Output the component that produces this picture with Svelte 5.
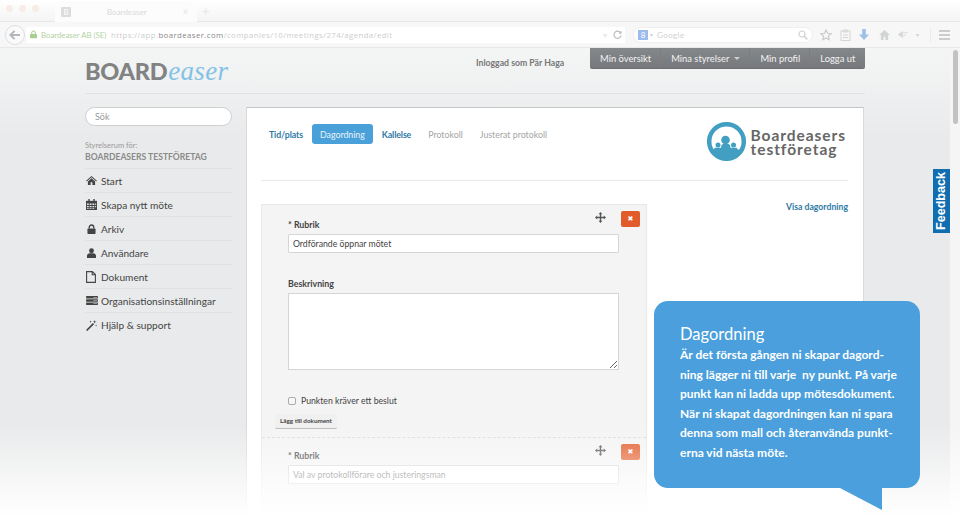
<script>
  const menu = [
    { label: 'Start', icon: 'home' },
    { label: 'Skapa nytt möte', icon: 'cal' },
    { label: 'Arkiv', icon: 'lock' },
    { label: 'Användare', icon: 'user' },
    { label: 'Dokument', icon: 'doc' },
    { label: 'Organisationsinställningar', icon: 'org' },
    { label: 'Hjälp & support', icon: 'wand' }
  ];
  const tabs = [
    { label: 'Tid/plats', kind: 'link' },
    { label: 'Dagordning', kind: 'active' },
    { label: 'Kallelse', kind: 'link' },
    { label: 'Protokoll', kind: 'off' },
    { label: 'Justerat protokoll', kind: 'off' }
  ];
  const nav = ['Min översikt', 'Mina styrelser', 'Min profil', 'Logga ut'];
</script>

{#snippet move()}
  <svg class="move" width="11" height="11" viewBox="0 0 11 11"><path d="M5.5 0 7.4 2.2H6.2V4.8H8.8V3.6L11 5.5 8.8 7.4V6.2H6.2V8.8H7.4L5.5 11 3.6 8.8H4.8V6.2H2.2V7.4L0 5.5 2.2 3.6V4.8H4.8V2.2H3.6Z" fill="#555"/></svg>
{/snippet}

<div class="window">
  <div class="tabbar">
    <div class="lights"><i></i><i></i><i></i></div>
    <div class="tab">
      <span class="favicon">B</span>
      <span class="tabtitle">Boardeaser</span>
      <span class="tabx">×</span>
    </div>
    <span class="plus">+</span>
  </div>
  <div class="toolbar">
    <span class="back">
      <svg width="12" height="10" viewBox="0 0 14 12"><path d="M6.5 1 1.5 6l5 5M2 6h11" fill="none" stroke="#b5b8bb" stroke-width="2.4"/></svg>
    </span>
    <div class="urlbar">
      <svg width="7" height="9" viewBox="0 0 8 9"><path d="M2 4V2.600a2 2 0 0 1 4 0V4" fill="none" stroke="#a9cf93" stroke-width="1.2"/><rect y="3.800" width="8" height="5" rx="1" fill="#a9cf93"/></svg>
      <span class="org">Boardeaser AB (SE)</span>
      <span class="url">https://app.<b>boardeaser.com</b>/companies/10/meetings/274/agenda/edit</span>
      <span class="urlend">▾</span>
      <svg width="9" height="9" viewBox="0 0 10 10"><path d="M8.500 3.200A4 4 0 1 0 9 6" fill="none" stroke="#bbb" stroke-width="1.2"/><path d="M9.500.8v3.400H6.100z" fill="#bbb"/></svg>
    </div>
    <div class="searchbar">
      <span class="g">8</span><span class="caret">▾</span>
      <span class="gtext">Google</span>
      <svg width="10" height="10" viewBox="0 0 10 10"><circle cx="4" cy="4" r="3" fill="none" stroke="#d0d0d0" stroke-width="1.2"/><path d="m6.200 6.200 3.200 3.200" stroke="#d0d0d0" stroke-width="1.500"/></svg>
    </div>
    <div class="tools">
      <svg width="12" height="12" viewBox="0 0 12 12"><path d="m6 1 1.500 3.300 3.600.4-2.700 2.400.8 3.600L6 8.900l-3.200 1.800.8-3.600L.9 4.700l3.600-.4Z" fill="none" stroke="#c8c8c8" stroke-width="1.100"/></svg>
      <svg width="11" height="12" viewBox="0 0 11 12"><rect x="1" y="2" width="9" height="9.500" fill="none" stroke="#d5d5d5"/><path d="M3.500 1h4v2h-4zM3 6h5M3 8.500h5" fill="none" stroke="#d5d5d5"/></svg>
      <svg width="10" height="11" viewBox="0 0 11 12"><path d="M3.500 0h4v6H11l-5.500 6L0 6h3.500Z" fill="#9dc0ea"/></svg>
      <svg class="gap" width="11" height="10" viewBox="0 0 12 11"><path d="M6 0 12 5.500h-2V11H7V7.500H5V11H2V5.500H0Z" fill="#d2d4d4"/></svg>
      <svg width="10" height="7" viewBox="0 0 11 8"><path d="M0 4 5 .8v6.400zM6 2h5M6 5h3" fill="#d8d8d8" stroke="#d8d8d8"/></svg>
      <span class="caret">▾</span>
      <span class="sep"></span>
      <span class="burger"><i></i><i></i><i></i></span>
    </div>
  </div>

  <div class="page">
    <div class="content">
      <header>
        <div class="brand"><b>BOARD</b><em>easer</em></div>
        <span class="who">Inloggad som Pär Haga</span>
        <nav>
          {#each nav as item, i}
            <span class="navitem">{item}{#if i === 1}<span class="navcaret"></span>{/if}</span>
          {/each}
        </nav>
      </header>

      <div class="columns">
        <aside>
          <div class="search">Sök</div>
          <div class="roomlabel">Styrelserum för:</div>
          <div class="roomname">BOARDEASERS TESTFÖRETAG</div>
          <ul>
            {#each menu as m}
              <li>
                <span class="ic">
                  {#if m.icon === 'home'}
                    <svg width="11" height="9" viewBox="0 0 12 10"><path d="M6 0 12 5.200l-.7.8L6 1.500.7 6 0 5.200ZM2 6l4-3.400L10 6v4H7V7H5v3H2Z" fill="#444"/></svg>
                  {:else if m.icon === 'cal'}
                    <svg width="11" height="11" viewBox="0 0 12 12"><path d="M0 2h12v10H0Z" fill="#444"/><path d="M2.500 0h1.500v3H2.500zM8 0h1.500v3H8z" fill="#444"/><path d="M1 5h2v1.500H1zM4 5h2v1.500H4zM7 5h2v1.500H7zM10 5h1v1.500h-1zM1 7.500h2V9H1zM4 7.500h2V9H4zM7 7.500h2V9H7zM10 7.500h1V9h-1zM1 10h2v1H1zM4 10h2v1H4zM7 10h2v1H7z" fill="#e8e9ea"/></svg>
                  {:else if m.icon === 'lock'}
                    <svg class="nudge" width="9" height="10" viewBox="0 0 10 11"><path d="M2.500 5V3.500a2.500 2.500 0 0 1 5 0V5" fill="none" stroke="#444" stroke-width="1.500"/><rect x=".5" y="5" width="9" height="6" rx=".8" fill="#444"/></svg>
                  {:else if m.icon === 'user'}
                    <svg class="nudge" width="9" height="10" viewBox="0 0 10 11"><circle cx="5" cy="3" r="2.700" fill="#444"/><path d="M0 11V8.500C0 6.800 1.500 6 3 5.800h4C8.500 6 10 6.800 10 8.500V11Z" fill="#444"/></svg>
                  {:else if m.icon === 'doc'}
                    <svg width="10" height="12" viewBox="0 0 10 12"><path d="M.6.600h5.800l3 3v7.800H.6ZM6.200.8v3h3" fill="none" stroke="#444" stroke-width="1.100"/></svg>
                  {:else if m.icon === 'org'}
                    <svg width="12" height="9" viewBox="0 0 13 10"><path d="M0 0h13v2.800H0ZM0 3.600h13v2.800H0ZM0 7.200h13V10H0Z" fill="#444"/><path d="M8 1h4v.8H8ZM8 4.600h4v.8H8ZM8 8.200h4V9H8Z" fill="#ddd"/></svg>
                  {:else}
                    <svg width="11" height="11" viewBox="0 0 12 12"><path d="M0 10.800 7.500 3.300l1.300 1.300-7.500 7.400Z" fill="#444"/><path d="M9.500 0l.5 1.500L11.500 2 10 2.500 9.500 4 9 2.500 7.500 2 9 1.500ZM5 .5l.4 1 1 .4-1 .4L5 3.300l-.4-1-1-.4 1-.4ZM11 5l.3.8.7.300-.7.300-.3.800-.3-.8-.7-.3.700-.3Z" fill="#444"/></svg>
                  {/if}
                </span>
                {m.label}
              </li>
            {/each}
          </ul>
        </aside>

        <main>
          <div class="cardhead">
            <div class="tabs">
              {#each tabs as t}
                <span class={t.kind}>{t.label}</span>
              {/each}
            </div>
            <div class="complogo">
              <svg width="39" height="39" viewBox="0 0 39 39">
                <circle cx="19.500" cy="19.500" r="17.300" fill="none" stroke="#429fc2" stroke-width="4.500"/>
                <circle cx="18.500" cy="18" r="4.300" fill="#429fc2"/>
                <circle cx="11" cy="23" r="2.500" fill="#429fc2"/>
                <circle cx="26.500" cy="23" r="2.500" fill="#429fc2"/>
                <path d="M4 28.500 6.500 27.500 8 25.800h6l.5-2.800 1.500-1h5.500l1.500 1 .5 2.800h6l1.500 1.700L35 28.500A18 18 0 0 1 4 28.500Z" fill="#429fc2"/>
              </svg>
              <div class="compname">Boardeasers<br />testföretag</div>
            </div>
          </div>
          <div class="divider"></div>

          <div class="cardbody">
            <div class="formcol">
              <section class="item">
                <div class="itemtools">{@render move()}<span class="del">✖</span></div>
                <label for="r1">* Rubrik</label>
                <input id="r1" type="text" value="Ordförande öppnar mötet" />
                <label class="l2" for="b1">Beskrivning</label>
                <textarea id="b1"></textarea>
                <div class="check"><input id="c1" type="checkbox" /><label for="c1">Punkten kräver ett beslut</label></div>
                <span class="adddoc">Lägg till dokument</span>
              </section>
              <section class="item second">
                <div class="itemtools">{@render move()}<span class="del">✖</span></div>
                <label for="r2">* Rubrik</label>
                <input id="r2" type="text" value="Val av protokollförare och justeringsman" />
                <label class="l2" for="b2">Beskrivning</label>
              </section>
            </div>
            <span class="showagenda">Visa dagordning</span>
          </div>
        </main>
      </div>
    </div>
    <div class="scrolltrack"><div class="thumb"></div></div>
  </div>

  <div class="fade"></div>

  <div class="feedback"><span>Feedback</span></div>

  <div class="bubble">
    <h2>Dagordning</h2>
    <p>Är det första gången ni skapar dagord-<br />ning lägger ni till varje&nbsp; ny punkt. På varje<br />punkt kan ni ladda upp mötesdokument.<br />När ni skapat dagordningen kan ni spara<br />denna som mall och återanvända punkt-<br />erna vid nästa möte.</p>
    <svg class="tail" width="42" height="22" viewBox="0 0 42 22"><path d="M0 0H42V22Z" fill="#4a9fdc"/></svg>
  </div>
</div>

<style>
  :global(body) {
    margin: 0;
    background: #fff;
  }
  .window {
    position: relative;
    width: 960px;
    height: 525px;
    overflow: hidden;
    font-family: Lato, "Liberation Sans", sans-serif;
    color: #444;
    display: flex;
    flex-direction: column;
  }
  .tabbar {
    height: 22px;
    display: flex;
    align-items: flex-end;
    background: linear-gradient(#fff, #f4f4f4);
    border-bottom: 1px solid #e8e8e8;
    box-sizing: border-box;
    padding-left: 6px;
  }
  .lights {
    display: flex;
    gap: 6px;
    align-self: flex-start;
    padding-top: 5px;
    width: 49px;
    flex: none;
  }
  .lights i {
    width: 7px;
    height: 7px;
    border-radius: 50%;
    background: #f8ebe8;
  }
  .tab {
    width: 142px;
    height: 21px;
    margin-bottom: -1px;
    background: #fcfcfc;
    border-radius: 7px 7px 0 0;
    display: flex;
    align-items: center;
    padding-left: 6px;
    box-sizing: border-box;
    font-size: 8px;
    color: #dadada;
  }
  .favicon {
    width: 10px;
    height: 10px;
    background: #dcdcdc;
    color: #fff;
    font-size: 8px;
    line-height: 10px;
    text-align: center;
    border-radius: 1px;
    margin-right: 36px;
  }
  .tabtitle {
    flex: 1;
  }
  .tabx {
    margin-right: 9px;
    font-size: 9px;
    color: #e2e2e2;
  }
  .plus {
    color: #e6e6e6;
    font-size: 13px;
    margin: 0 0 2px 5px;
  }
  .toolbar {
    height: 26px;
    box-sizing: border-box;
    background: #f7f7f7;
    border-bottom: 1px solid #e8e8e8;
    display: flex;
    align-items: center;
    padding: 0 0 0 5px;
  }
  .back {
    width: 20px;
    height: 20px;
    border-radius: 50%;
    border: 1px solid #dedede;
    background: #fafafa;
    box-sizing: border-box;
    display: flex;
    align-items: center;
    justify-content: center;
    margin-right: 1px;
    flex: none;
  }
  .urlbar {
    width: 599px;
    height: 16px;
    flex: none;
    box-sizing: border-box;
    background: #fff;
    display: flex;
    align-items: center;
    padding: 0 3px 0 4px;
    font-size: 7.800px;
  }
  .org {
    color: #b4d29f;
    margin-left: 4px;
    width: 70px;
    flex: none;
    white-space: nowrap;
  }
  .url {
    color: #cdcdcd;
    flex: 1;
    letter-spacing: .41px;
    white-space: nowrap;
    font-family: "Open Sans", sans-serif;
  }
  .url b {
    color: #888;
    font-weight: 400;
  }
  .urlend {
    color: #e8e8e8;
    margin-right: 6px;
  }
  .searchbar {
    width: 180px;
    height: 16px;
    flex: none;
    margin-left: 8px;
    background: #fff;
    border-radius: 8px;
    border: 1px solid #efefef;
    box-sizing: border-box;
    display: flex;
    align-items: center;
    padding: 0 4px 0 4px;
    font-size: 8px;
    color: #d0d0d0;
  }
  .g {
    width: 10px;
    height: 10px;
    background: #9dbcee;
    color: #fff;
    text-align: center;
    line-height: 10px;
    margin-right: 2px;
  }
  .caret {
    font-size: 6px;
    color: #d0d0d0;
  }
  .gtext {
    margin-left: 4px;
    flex: 1;
    font-size: 8px;
    letter-spacing: .4px;
  }
  .tools {
    display: flex;
    align-items: center;
    gap: 8px;
    margin-left: 7px;
    flex: 1;
  }
  .tools .gap {
    margin-left: 2px;
  }
  .sep {
    width: 1px;
    height: 14px;
    margin-left: 3px;
    background: #ebebeb;
  }
  .burger {
    display: flex;
    flex-direction: column;
    gap: 2px;
  }
  .burger i {
    display: block;
    width: 11px;
    height: 2px;
    background: #cccccc;
  }
  .page {
    flex: 1;
    min-height: 0;
    display: flex;
    background: linear-gradient(#f4f5f5, #e9eaeb 90px);
    overflow: hidden;
  }
  .content {
    flex: 1;
    min-width: 0;
    padding: 0 85px;
  }
  header {
    height: 45px;
    border-bottom: 1px solid #e1e2e3;
    display: flex;
    align-items: flex-start;
  }
  .brand {
    margin-top: 8px;
    font-size: 23.500px;
    line-height: 30px;
    color: #828282;
    letter-spacing: -.3px;
    width: 391px;
    flex: none;
    white-space: nowrap;
  }
  .brand b {
    font-weight: 900;
  }
  .brand em {
    font-family: "Liberation Serif", serif;
    color: #83c2e6;
    font-size: 27px;
    letter-spacing: .3px;
    margin-left: 1px;
  }
  .who {
    font-size: 8.700px;
    line-height: 12px;
    color: #777;
    margin-top: 9px;
    font-weight: 700;
    width: 114px;
    flex: none;
    white-space: nowrap;
  }
  nav {
    height: 21px;
    flex: none;
    display: flex;
    background: linear-gradient(#85888b, #76787b);
    border-bottom: 1px solid #6d6f72;
    box-sizing: border-box;
    border-radius: 0 0 2px 2px;
    font-size: 9.400px;
    color: #f2f2f2;
  }
  .navitem {
    padding: 1px 10px 0;
    line-height: 19px;
    white-space: nowrap;
    box-shadow: inset -1px 0 #7b7d80;
    display: flex;
    align-items: center;
  }
  .navitem:last-child {
    box-shadow: none;
  }
  .navcaret {
    margin-left: 5px;
    width: 0;
    height: 0;
    border: 3px solid transparent;
    border-top-color: #cfcfcf;
    border-bottom: 0;
  }
  .columns {
    display: flex;
    gap: 14px;
    padding-top: 13px;
    align-items: flex-start;
  }
  aside {
    width: 147px;
    flex: none;
  }
  .search {
    height: 19px;
    margin-bottom: 14px;
    background: #fff;
    border: 1px solid #cfd0d1;
    border-radius: 10px;
    box-sizing: border-box;
    padding-left: 9px;
    font-size: 9px;
    line-height: 17px;
    color: #999;
  }
  .roomlabel {
    font-size: 7.500px;
    color: #999;
    line-height: 11px;
  }
  .roomname {
    font-size: 8.600px;
    font-weight: 700;
    color: #8a8a8a;
    line-height: 12px;
    padding-bottom: 5px;
    border-bottom: 1px solid #e0e1e2;
    white-space: nowrap;
  }
  ul {
    list-style: none;
    margin: 0;
    padding: 0;
  }
  li {
    height: 24px;
    box-sizing: border-box;
    border-bottom: 1px solid #e0e1e2;
    display: flex;
    align-items: center;
    font-size: 10.100px;
    color: #444;
    white-space: nowrap;
  }
  li:last-child {
    border-bottom: 0;
  }
  .ic {
    width: 16px;
    display: flex;
    justify-content: flex-start;
    padding-left: 1px;
    box-sizing: border-box;
  }
  .nudge {
    margin-left: 1px;
  }
  main {
    width: 618px;
    flex: none;
    height: 480px;
    background: #fff;
    border: 1px solid #d9dadb;
    border-top-color: #c4c5c6;
    box-sizing: border-box;
    padding: 0 15px 0 14px;
  }
  .cardhead {
    height: 72px;
    display: flex;
    justify-content: space-between;
    align-items: flex-start;
    padding-right: 2px;
  }
  .tabs {
    display: flex;
    align-items: center;
    padding: 16px 0 0 8px;
    font-size: 8.800px;
    font-weight: 700;
    gap: 9px;
  }
  .tabs span {
    line-height: 19px;
    padding-top: 1px;
    white-space: nowrap;
  }
  .tabs .link {
    color: #2f7aa5;
    letter-spacing: -.12px;
  }
  .tabs .active {
    background: #4aa1d9;
    color: #e8f3fa;
    padding: 1px 8px 0;
    border-radius: 3px;
    font-weight: 400;
  }
  .tabs .off {
    color: #a5a5a5;
    font-weight: 400;
    margin-left: 8px;
  }
  .complogo {
    display: flex;
    align-items: center;
    gap: 5px;
    margin-top: 14px;
  }
  .compname {
    font-size: 15.500px;
    line-height: 14px;
    font-weight: 700;
    color: #666;
    letter-spacing: .95px;
    white-space: nowrap;
  }
  .divider {
    height: 1px;
    background: #eaeaea;
  }
  .cardbody {
    display: flex;
    justify-content: space-between;
    padding-top: 23px;
  }
  .formcol {
    width: 386px;
    background: #f4f4f4;
    border: 1px solid #e8e8e8;
    box-sizing: border-box;
  }
  .item {
    position: relative;
    padding: 14px 26px 0 26px;
    display: flex;
    flex-direction: column;
    align-items: flex-start;
  }
  .item.second {
    border-top: 1px dashed #ddd;
    padding-top: 12px;
    height: 90px;
  }
  .item > label {
    font-size: 8.800px;
    font-weight: 700;
    color: #444;
    line-height: 12px;
    margin-bottom: 3px;
  }
  .item .l2 {
    margin-top: 25px;
    margin-bottom: 3px;
  }
  .item.second .l2 {
    color: #c4c4c4;
    margin-top: 29px;
  }
  input[type="text"] {
    width: 331px;
    height: 19px;
    box-sizing: border-box;
    border: 1px solid #d5d5d5;
    background: #fff;
    font: 8.700px Lato, sans-serif;
    color: #444;
    padding: 0 4px;
    border-radius: 1px;
  }
  .second input[type="text"] {
    color: #666;
  }
  textarea {
    width: 331px;
    height: 77px;
    box-sizing: border-box;
    border: 1px solid #d5d5d5;
    background: #fff;
    display: block;
    margin: 0;
  }
  .check {
    display: flex;
    align-items: center;
    margin-top: 24px;
    font-size: 8.700px;
    color: #444;
    gap: 5px;
    line-height: 14px;
  }
  .check input {
    appearance: none;
    margin: 0;
    width: 8px;
    height: 8px;
    border: 1px solid #aaa;
    border-radius: 2px;
    background: #f7f7f7;
    box-sizing: border-box;
  }
  .adddoc {
    margin: 6px 0 8px -13px;
    font-size: 6.300px;
    font-weight: 700;
    color: #444;
    line-height: 12px;
    padding: 1px 5px;
    background: #f0f0f0;
    border-bottom: 1px solid #bbb;
    border-radius: 2px;
    white-space: nowrap;
  }
  .itemtools {
    position: absolute;
    right: 6px;
    top: 6px;
    display: flex;
    align-items: center;
    gap: 15px;
  }
  .move {
    margin-top: -3px;
  }
  .del {
    width: 19px;
    height: 16px;
    background: #e25c2b;
    color: #fff;
    font-size: 7px;
    line-height: 16px;
    text-align: center;
    border-radius: 2px;
    font-family: "DejaVu Sans", sans-serif;
  }
  .showagenda {
    font-size: 8.700px;
    color: #2f7aa5;
    font-weight: 700;
    line-height: 12px;
    margin-top: -3px;
    white-space: nowrap;
  }
  .scrolltrack {
    width: 10px;
    flex: none;
    background: #f5f5f5;
    padding: 2px 2px 0 3px;
    box-sizing: border-box;
  }
  .thumb {
    height: 74px;
    background: #c2c2c2;
    border-radius: 3px;
  }
  .fade {
    position: absolute;
    left: 0;
    right: 0;
    bottom: 0;
    height: 100px;
    background: linear-gradient(rgba(255,255,255,0), rgba(255,255,255,.3) 28%, rgba(255,255,255,.8) 70%, #fff 92%);
    pointer-events: none;
  }
  .feedback {
    position: absolute;
    left: 933px;
    top: 169px;
    width: 17px;
    height: 64px;
    background: #106eb0;
    color: #fff;
    font-family: "Liberation Sans", sans-serif;
    font-size: 12.600px;
    font-weight: 700;
    display: flex;
    align-items: center;
    justify-content: center;
  }
  .feedback span {
    transform: rotate(-90deg);
    white-space: nowrap;
  }
  .bubble {
    position: absolute;
    left: 654px;
    top: 301px;
    width: 266px;
    height: 187px;
    box-sizing: border-box;
    background: #4a9fdc;
    border-radius: 14px;
    padding: 22px 20px 0 26px;
    color: #fff;
  }
  .bubble h2 {
    margin: 0;
    font-size: 16.500px;
    font-weight: 400;
    line-height: 22px;
  }
  .bubble p {
    margin: 0;
    font-size: 12px;
    font-weight: 700;
    line-height: 19.600px;
    white-space: nowrap;
  }
  .tail {
    position: absolute;
    left: 186px;
    top: 187px;
  }
</style>
